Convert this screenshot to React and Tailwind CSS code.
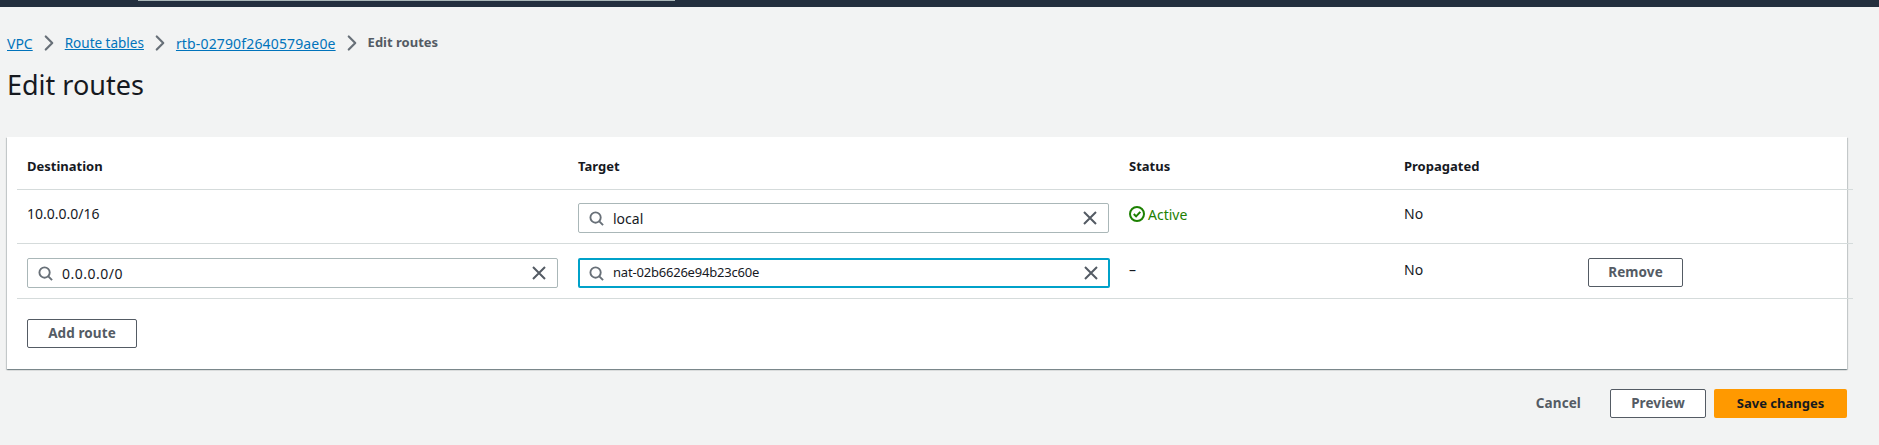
import { ChevronRight } from "lucide-react";

const FONT = "font-['Noto_Sans','Open_Sans',sans-serif]";

function SearchIcon() {
  return (
    <svg width="15" height="15" viewBox="0 0 16 16" fill="none" stroke="#687078" strokeWidth="2" className="shrink-0">
      <circle cx="7" cy="7" r="5.5" />
      <path d="M11 11l4 4" />
    </svg>
  );
}

function ClearIcon() {
  return (
    <svg width="14" height="14" viewBox="0 0 14 14" fill="none" stroke="#545b64" strokeWidth="2" className="shrink-0">
      <path d="M1 1l12 12M13 1L1 13" />
    </svg>
  );
}

function CheckCircle() {
  return (
    <svg width="16" height="16" viewBox="0 0 16 16" fill="none" stroke="#1d8102" strokeWidth="2" className="shrink-0">
      <circle cx="8" cy="8" r="7" />
      <path d="M4.8 8l2.3 2.4 4.2-4.6" />
    </svg>
  );
}

function SearchInput({ value, focused, textClass }) {
  return (
    <div
      className={
        focused
          ? "flex h-[30px] w-[532px] items-center justify-between rounded-[2px] border-2 border-[#00a1c9] bg-white pl-[9px] pr-[10px]"
          : "flex h-[30px] w-[531px] items-center justify-between rounded-[2px] border border-[#aab7b8] bg-white pl-[10px] pr-[11px]"
      }
    >
      <div className="flex items-center gap-[9px]">
        <SearchIcon />
        <span className={`text-[#16191f] ${textClass}`}>{value}</span>
      </div>
      <ClearIcon />
    </div>
  );
}

function Button({ children, className }) {
  return (
    <button
      className={`flex h-[29px] items-center justify-center rounded-[2px] border border-[#545b64] bg-white text-[13.5px] font-bold tracking-[0.1px] text-[#545b64] ${className}`}
    >
      {children}
    </button>
  );
}

function Crumb({ children, className }) {
  return <a className={`text-[#0073bb] underline ${className}`}>{children}</a>;
}

function Sep() {
  return <ChevronRight size={26} strokeWidth={2} className="mx-[3px] text-[#687078]" />;
}

const rowGrid = "grid grid-cols-[551px_551px_275px_184px_1fr] pl-[10px]";

export default function App() {
  return (
    <div className={`${FONT} h-[445px] w-[1879px] overflow-hidden bg-[#f2f3f3] text-[#16191f]`}>
      <div className="h-[7px] bg-[#232f3e]">
        <div className="ml-[138px] h-px w-[537px] bg-[#aab7b8]" />
      </div>

      <nav className="mt-[26px] flex h-[20px] items-center pl-[7px]">
        <Crumb className="text-[14px]">VPC</Crumb>
        <Sep />
        <Crumb className="text-[13.5px]">Route tables</Crumb>
        <Sep />
        <Crumb className="text-[14px] tracking-[0.15px]">rtb-02790f2640579ae0e</Crumb>
        <Sep />
        <span className="text-[13px] font-bold text-[#545b64]">Edit routes</span>
      </nav>

      <h1 className="mt-[14px] pl-[7px] text-[27px] leading-[36px]">Edit routes</h1>

      <section className="ml-[7px] mt-[34px] h-[232px] w-[1840px] bg-white shadow-[0_1px_1px_0_rgba(0,28,36,0.3),1px_1px_1px_0_rgba(0,28,36,0.15),-1px_1px_1px_0_rgba(0,28,36,0.15)]">
        <div className="-mr-[6px] ml-[10px]">
          <div className={`${rowGrid} h-[53px] items-center border-b border-[#d5dbdb] pt-[8px] text-[13px] font-bold`}>
            <div>Destination</div>
            <div>Target</div>
            <div>Status</div>
            <div>Propagated</div>
          </div>

          <div className={`${rowGrid} h-[54px] border-b border-[#d5dbdb] pt-[13px] text-[14px]`}>
            <div>10.0.0.0/16</div>
            <SearchInput value="local" textClass="text-[14px]" />
            <div className="flex h-[20px] items-center gap-[3px] pt-[2px] text-[#1d8102]">
              <CheckCircle />
              Active
            </div>
            <div>No</div>
          </div>

          <div className={`${rowGrid} h-[55px] border-b border-[#d5dbdb] pt-[14px] text-[14px]`}>
            <SearchInput value="0.0.0.0/0" textClass="text-[14px] tracking-[0.5px]" />
            <SearchInput value="nat-02b6626e94b23c60e" focused textClass="text-[13px] tracking-[-0.2px]" />
            <div className="pt-[1px]">–</div>
            <div className="pt-[1px]">No</div>
            <Button className="w-[95px]">Remove</Button>
          </div>

          <div className="pl-[10px] pt-[20px]">
            <Button className="w-[110px]">Add route</Button>
          </div>
        </div>
      </section>

      <footer className="mr-[32px] mt-[20px] flex items-center justify-end">
        <span className="mr-[29px] text-[13.5px] font-bold tracking-[0.1px] text-[#545b64]">Cancel</span>
        <Button className="mr-[8px] w-[96px]">Preview</Button>
        <button className="flex h-[29px] w-[133px] items-center justify-center rounded-[2px] bg-[#ff9900] text-[13px] font-bold text-[#16191f]">
          Save changes
        </button>
      </footer>
    </div>
  );
}
